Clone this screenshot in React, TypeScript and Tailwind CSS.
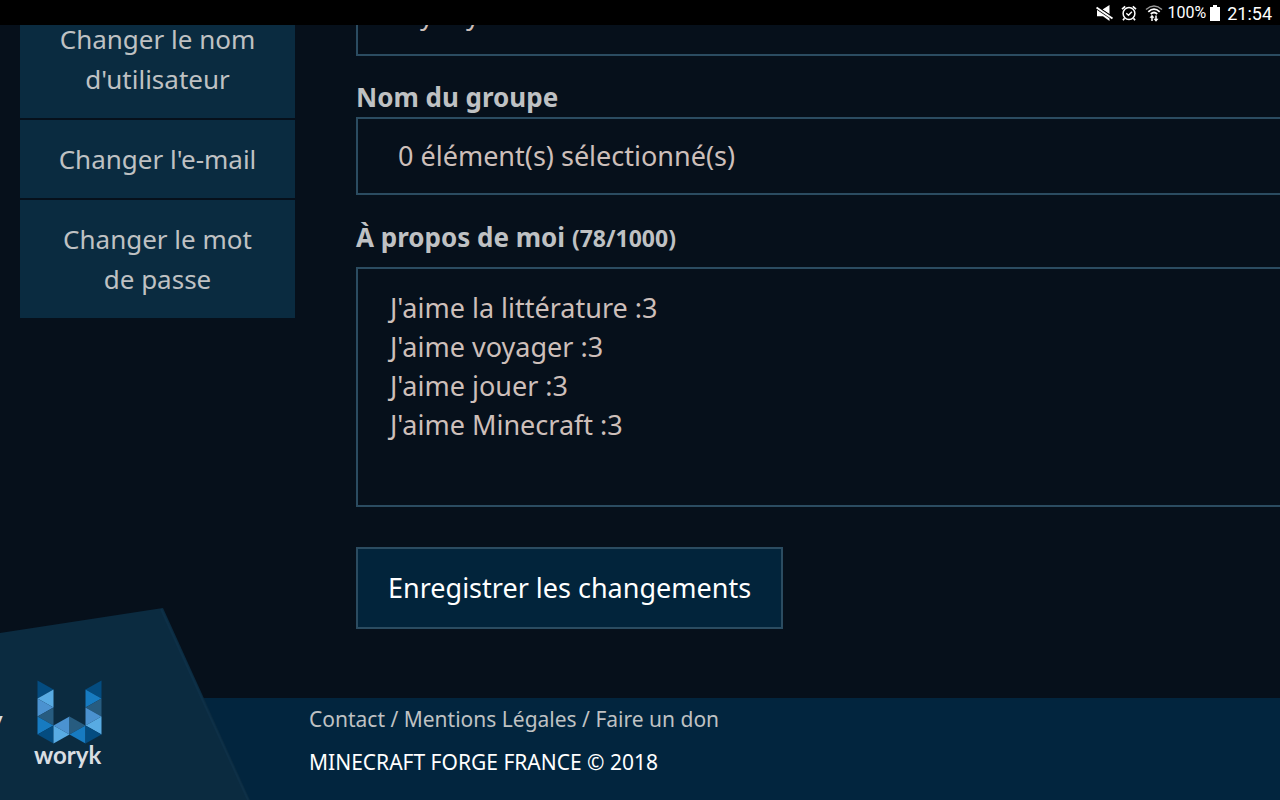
const navItems = ["Changer le nom d'utilisateur", "Changer l'e-mail", "Changer le mot de passe"];

const aboutText = "J'aime la littérature :3\nJ'aime voyager :3\nJ'aime jouer :3\nJ'aime Minecraft :3";

function StatusBar() {
  return (
    <header className="relative z-10 flex h-[25px] shrink-0 items-center justify-end bg-black pr-2 font-['Roboto',sans-serif] text-white">
      <svg className="mr-2 h-4 w-[17px]" viewBox="0 0 17 16" fill="currentColor" aria-label="Son coupé">
        <path d="M6.500 4.500 13.500 0v9.200zM1 5h3.500l9 6.300V16l-6.500-4.800H1z" />
        <path d="M.8 2.700 16.500 13.300" stroke="#000" strokeWidth="3.400" />
        <path d="M.5 2.500 16.500 13.500" stroke="currentColor" strokeWidth="2" />
      </svg>
      <svg className="mr-2 size-4" viewBox="0 0 16 16" fill="none" stroke="currentColor" aria-label="Alarme">
        <circle cx="8" cy="8.5" r="5.9" strokeWidth="1.5" />
        <path d="M1 4.2 4.2 1.4M15 4.2l-3.2-2.800M3.500 13.200 2 15.200M12.500 13.200l1.500 2" strokeWidth="1.7" />
        <path d="m5.300 8.300 2.200 2 3.400-3.600" strokeWidth="1.400" />
      </svg>
      <svg className="mr-1 h-[18px] w-[18px]" viewBox="0 0 18 18" fill="none" stroke="currentColor" aria-label="Wi-Fi">
        <path d="M1 5.500Q9-1.500 17 5.500" strokeWidth="1.500" opacity=".6" />
        <path d="M3.300 7.800Q9 2.500 14.700 7.800M5.800 10Q9 7 12.200 10" strokeWidth="1.800" />
        <path d="M7 17v-5M11 11.500v5" strokeWidth="1.500" />
        <path d="M4.500 13.700 7 10.800l2.500 2.900zM8.500 14.800 11 17.700 13.500 14.800z" fill="currentColor" stroke="none" />
      </svg>
      <span className="text-base">100%</span>
      <svg className="ml-1 h-4 w-[10px]" viewBox="0 0 10 16" fill="currentColor" aria-label="Batterie">
        <path d="M3 0h4v2h3v14H0V2h3z" />
      </svg>
      <time className="ml-[7px] pt-[2px] text-lg leading-5">21:54</time>
    </header>
  );
}

function WorykBadge() {
  return (
    <div className="absolute bottom-0 left-0 h-[192px] w-[250px]">
      <svg className="size-full" viewBox="0 0 250 192" aria-label="woryk">
        <path d="M0 25 163 0 250 192H0z" fill="#0b2b40" />
        <path d="M161 1 248 192" stroke="#0e3047" strokeWidth="2" />
        <text x="-9" y="120" fill="#d9dee2" className="font-['Lato',sans-serif] text-[22px] font-bold">y</text>
        <g transform="translate(37.500 72.500)">
          <path d="M0 0 16 9 0 18z" fill="#044c80" />
          <path d="M16 9V27L0 18z" fill="#58abe3" />
          <path d="M0 18 16 27 0 36z" fill="#4b92d0" />
          <path d="M16 27V45L0 36z" fill="#275c80" />
          <path d="M0 36 16 45 0 54z" fill="#177bc1" />
          <path d="M0 54 16 45V63z" fill="#044c80" />
          <path d="M16 45 32 36V54z" fill="#4b92d0" />
          <path d="M16 45 32 54 16 63z" fill="#58abe3" />
          <path d="M32 36 48 45 32 54z" fill="#275c80" />
          <path d="M32 54 48 45V63z" fill="#177bc1" />
          <path d="M64 0V18L48 9z" fill="#044c80" />
          <path d="M48 9 64 18 48 27z" fill="#177bc1" />
          <path d="M64 18V36L48 27z" fill="#275c80" />
          <path d="M48 27 64 36 48 45z" fill="#4b92d0" />
          <path d="M64 36V54L48 45z" fill="#58abe3" />
          <path d="M48 45 64 54 48 63z" fill="#044c80" />
        </g>
        <text x="34" y="156" fill="#d9dee2" className="font-['Lato',sans-serif] text-[24px] font-bold">woryk</text>
      </svg>
    </div>
  );
}

const field = "block w-full border-2 border-[#2b4c61] bg-[#06101b] text-[#cdbfba] outline-none";

export default function App() {
  return (
    <div className="relative flex min-h-screen flex-col overflow-hidden bg-[#06101b] font-['Noto_Sans',sans-serif] text-[27px] leading-10 text-[#bfc1c3]">
      <StatusBar />
      <main className="flex flex-1 overflow-hidden pl-5">
        <nav className="-mt-[25px] flex w-[275px] shrink-0 flex-col gap-[2px] text-[26px]">
          {navItems.map((item) => (
            <a key={item} href="#" className="bg-[#0a2b40] px-8 py-[19px] text-center">
              {item}
            </a>
          ))}
        </nav>
        <form className="-mr-10 ml-[61px] flex-1 pb-[69px]" onSubmit={(e) => e.preventDefault()}>
          <input aria-label="Pseudo" defaultValue="Loyboy" className={`${field} -mt-[47px] h-[78px] px-8 pb-2`} />
          <label htmlFor="group" className="mt-[21px] block text-[26px] font-bold">Nom du groupe</label>
          <button id="group" type="button" className={`${field} h-[78px] px-10 text-left`}>
            0 élément(s) sélectionné(s)
          </button>
          <label htmlFor="about" className="mt-[22px] mb-[9px] block text-[26px] font-bold">
            À propos de moi <span className="text-[23px]">(78/1000)</span>
          </label>
          <textarea id="about" defaultValue={aboutText} className={`${field} h-60 resize-none px-8 py-[19px] leading-[39px]`} />
          <button type="submit" className="mt-10 h-[82px] border-2 border-[#2b4c61] bg-[#02243b] px-[30px] text-white">
            Enregistrer les changements
          </button>
        </form>
      </main>
      <footer className="h-[102px] shrink-0 bg-[#02253e] pl-[309px] text-[21px] leading-[44px]">
        <nav className="leading-[42px]">
          <a href="#">Contact</a> / <a href="#">Mentions Légales</a> / <a href="#">Faire un don</a>
        </nav>
        <p className="text-white">MINECRAFT FORGE FRANCE © 2018</p>
      </footer>
      <WorykBadge />
    </div>
  );
}
